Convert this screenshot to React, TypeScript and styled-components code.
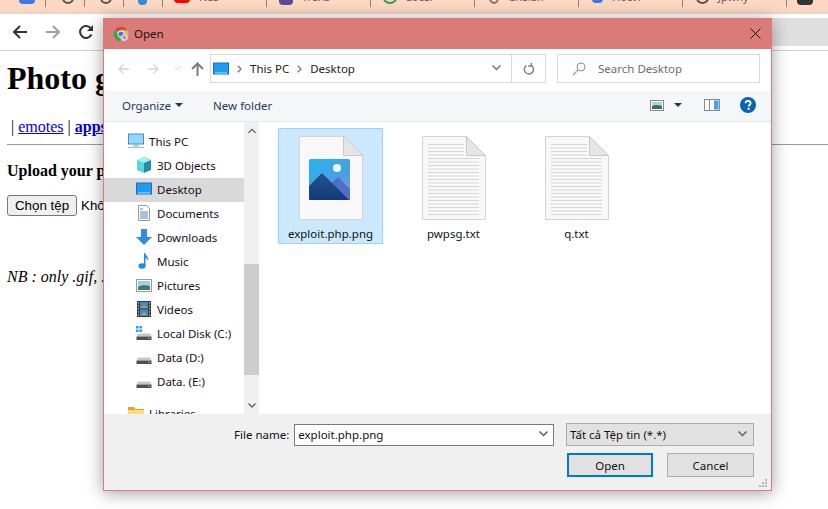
import React from "react";
import styled, { createGlobalStyle } from "styled-components";

const GlobalStyle = createGlobalStyle`
  html, body { margin: 0; padding: 0; background: #ffffff; }
  #root { width: 828px; height: 509px; overflow: hidden; }
`;

const UI_FONT = `"Noto Sans", "Open Sans", sans-serif`;

const Screen = styled.div`
  position: relative;
  width: 828px;
  height: 509px;
  overflow: hidden;
  background: #ffffff;
  font-family: "Liberation Serif", serif;
`;

/* ---------- browser chrome ---------- */

const BookmarkStrip = styled.div`
  display: flex;
  height: 14px;
  padding-left: 7px;
  background: linear-gradient(180deg, #fdd9c4 0%, #fcd8c3 70%, #eed2c0 100%);
  overflow: hidden;
`;

const Bookmark = styled.div<{ $w: number; $pad: number }>`
  display: flex;
  align-items: flex-start;
  gap: 9px;
  flex: 0 0 ${({ $w }) => $w}px;
  height: 7px;
  padding-left: ${({ $pad }) => $pad}px;
  box-sizing: border-box;
  border-right: 1px solid #8b8580;
  white-space: nowrap;
`;

const BookmarkIcon = styled.span<{ $c: string; $w: number; $show: number; $ring?: boolean }>`
  display: block;
  flex: none;
  box-sizing: border-box;
  width: ${({ $w }) => $w}px;
  height: ${({ $ring }) => ($ring ? 12 : 10)}px;
  margin-top: ${({ $show, $ring }) => $show - ($ring ? 12 : 10)}px;
  border-radius: ${({ $ring }) => ($ring ? "50%" : "0 0 4px 4px")};
  background: ${({ $c, $ring }) => ($ring ? "transparent" : $c)};
  border: ${({ $c, $ring }) => ($ring ? `2px solid ${$c}` : "0")};
`;

const BookmarkText = styled.span`
  margin-top: -8px;
  font: 11px/10px ${UI_FONT};
  color: #6a5560;
`;

const BrowserBar = styled.div`
  display: flex;
  align-items: center;
  height: 36px;
  padding-left: 12px;
  gap: 17px;
  background: #ffffff;
  border-bottom: 1px solid #cccccc;
`;

const Omnibox = styled.div`
  flex: 1;
  height: 28px;
  margin: 0 0 0 8px;
  background: #dfdfdf;
`;

/* ---------- page behind the dialog ---------- */

const Page = styled.main`
  padding: 0 7px;
  color: #000;
  font-size: 16px;
`;

const PageTitle = styled.h1`
  margin: 9px 0 0;
  font-size: 32px;
  line-height: 37px;
  white-space: nowrap;
`;

const LinkRow = styled.p`
  margin: 21px 0 0;
  padding-left: 4px;
  line-height: 18px;
  white-space: nowrap;
  a { color: #0000ee; }
`;

const Rule = styled.hr`
  margin: 8px -7px 0 0;
  border: 0;
  border-top: 1px solid #9a9a9a;
`;

const UploadHeading = styled.p`
  margin: 17px 0 0;
  font-weight: bold;
  line-height: 18px;
  white-space: nowrap;
`;

const FileRow = styled.div`
  display: flex;
  align-items: center;
  gap: 4px;
  margin-top: 15px;
  font: 13.33px "Liberation Sans", sans-serif;
  white-space: nowrap;
`;

const ChooseButton = styled.button`
  width: 70px;
  height: 21px;
  padding: 0;
  background: #efefef;
  border: 1px solid #767676;
  border-radius: 3px;
  color: #000;
  font: 13.33px "Liberation Sans", sans-serif;
`;

const Note = styled.p`
  margin: 52px 0 0;
  font-style: italic;
  line-height: 18px;
  white-space: nowrap;
`;

/* ---------- dialog ---------- */

const Dialog = styled.section`
  position: absolute;
  left: 103px;
  top: 18px;
  width: 669px;
  height: 473px;
  box-sizing: border-box;
  display: flex;
  flex-direction: column;
  background: #ffffff;
  border: 1px solid #da7d7a;
  border-top: 0;
  box-shadow: 0 2px 16px rgba(0, 0, 0, 0.38);
  font-family: ${UI_FONT};
  font-size: 11.5px;
  color: #111;
`;

const TitleBar = styled.header`
  display: flex;
  align-items: center;
  flex: 0 0 31px;
  margin: 0 -1px;
  padding: 0 11px 0 10px;
  gap: 5px;
  background: #db7b79;
  font-size: 11.5px;
  color: #1b1111;
`;

const TitleText = styled.span`
  flex: 1;
`;

const NavRow = styled.div`
  display: flex;
  align-items: center;
  flex: 0 0 42px;
  padding: 0 0 3px 4px;
  box-sizing: border-box;
`;

const NavButton = styled.span<{ $w: number }>`
  display: flex;
  justify-content: center;
  flex: 0 0 ${({ $w }) => $w}px;
`;

const AddressBox = styled.div`
  display: flex;
  align-items: center;
  flex: 0 0 336px;
  height: 29px;
  margin-left: 2px;
  padding-left: 2px;
  box-sizing: border-box;
  border: 1px solid #d9d9d9;
  color: #222;
`;

const Crumb = styled.span`
  display: flex;
  margin: 0 8px;
`;

const AddressChevron = styled.span`
  display: flex;
  margin-left: auto;
  margin-right: 10px;
`;

const AddressEnd = styled.div`
  display: flex;
  align-items: center;
  justify-content: center;
  width: 33px;
  height: 100%;
  border-left: 1px solid #d9d9d9;
`;

const SearchBox = styled.div`
  display: flex;
  align-items: center;
  flex: 0 0 203px;
  height: 29px;
  margin-left: 11px;
  padding-left: 14px;
  gap: 12px;
  box-sizing: border-box;
  border: 1px solid #d9d9d9;
  color: #6d6d6d;
  white-space: nowrap;
`;

const CommandBar = styled.div`
  display: flex;
  align-items: center;
  flex: 0 0 31px;
  box-sizing: border-box;
  padding: 0 15px 2px 18px;
  background: #f5f6f7;
  border-bottom: 1px solid #e8e9ea;
  color: #1e395b;
`;

const Command = styled.span<{ $after?: number; $inner?: number }>`
  display: flex;
  align-items: center;
  gap: ${({ $inner }) => $inner ?? 5}px;
  margin-right: ${({ $after }) => $after ?? 0}px;
  white-space: nowrap;
`;

const CommandSpacer = styled.span`
  flex: 1;
`;

const Body = styled.div`
  display: flex;
  flex: 1;
  min-height: 0;
`;

const Sidebar = styled.nav`
  flex: 0 0 140px;
  padding-top: 8px;
  overflow: hidden;
`;

const SideRow = styled.div<{ $root?: boolean; $active?: boolean; $gapAbove?: boolean }>`
  display: flex;
  align-items: center;
  gap: 5px;
  height: 24px;
  box-sizing: border-box;
  margin-top: ${({ $gapAbove }) => ($gapAbove ? 8 : 0)}px;
  padding: 0 0 2px ${({ $root }) => ($root ? 24 : 32)}px;
  background: ${({ $active }) => ($active ? "#d9d9d9" : "transparent")};
  color: #1a0a1a;
  white-space: nowrap;
`;

const SideIcon = styled.span`
  display: flex;
  align-items: center;
  justify-content: center;
  flex: 0 0 16px;
  height: 16px;
`;

const ScrollBar = styled.div`
  display: flex;
  flex-direction: column;
  flex: 0 0 15px;
  background: #f0f0f0;
`;

const ScrollEnd = styled.span`
  display: flex;
  align-items: center;
  justify-content: center;
  flex: 0 0 17px;
`;

const ScrollTrack = styled.div`
  flex: 1;
  padding-top: 125px;
`;

const ScrollThumb = styled.div`
  height: 111px;
  background: #cdcdcd;
`;

const FileGrid = styled.div`
  display: flex;
  flex: 1;
  align-items: flex-start;
  gap: 18px;
  padding: 6px 0 0 19px;
`;

const FileTile = styled.div<{ $selected?: boolean }>`
  display: flex;
  flex-direction: column;
  align-items: center;
  width: 105px;
  height: 116px;
  box-sizing: border-box;
  padding-top: 7px;
  background: ${({ $selected }) => ($selected ? "#cce8ff" : "transparent")};
  border: 1px solid ${({ $selected }) => ($selected ? "#99d1ff" : "transparent")};
  color: #111;
`;

const FileLabel = styled.span`
  margin-top: 6px;
  line-height: 16px;
`;

const Footer = styled.footer`
  position: relative;
  display: grid;
  grid-template-columns: 260px 188px;
  grid-template-rows: 23px 24px;
  column-gap: 12px;
  row-gap: 7px;
  justify-content: end;
  flex: 0 0 76px;
  box-sizing: border-box;
  padding: 9px 17px 0 0;
  background: #f0f0f0;
`;

const FileNameField = styled.label`
  display: flex;
  align-items: center;
  margin-left: -60px;
  gap: 5px;
  white-space: nowrap;
`;

const FileNameInput = styled.div`
  display: flex;
  align-items: center;
  justify-content: space-between;
  flex: 1;
  height: 22px;
  box-sizing: border-box;
  padding: 0 5px 0 3px;
  background: #fff;
  border: 1px solid #7a7a7a;
`;

const TypeSelect = styled.div`
  display: flex;
  align-items: center;
  justify-content: space-between;
  padding: 0 6px 0 3px;
  background: #e1e1e1;
  border: 1px solid #adadad;
  white-space: nowrap;
`;

const Buttons = styled.div`
  grid-column: 2;
  display: flex;
  justify-content: space-between;
  padding-left: 1px;
`;

const DialogButton = styled.button<{ $primary?: boolean }>`
  width: ${({ $primary }) => ($primary ? 86 : 87)}px;
  height: 24px;
  padding: 0;
  box-sizing: border-box;
  background: #e1e1e1;
  border: ${({ $primary }) => ($primary ? "2px solid #0078d7" : "1px solid #adadad")};
  color: #111;
  font-family: ${UI_FONT};
  font-size: 11.5px;
`;

const ResizeGrip = styled.svg`
  position: absolute;
  right: 3px;
  bottom: 2px;
`;

/* ---------- icons ---------- */

const ArrowLeft = ({ c = "#333" }: { c?: string }) => (
  <svg width="16" height="16" viewBox="0 0 16 16" fill="none" stroke={c} strokeWidth="2">
    <path d="M15 8H2M8 2 2 8l6 6" />
  </svg>
);

const ArrowRight = ({ c = "#a0a0a0" }: { c?: string }) => (
  <svg width="16" height="16" viewBox="0 0 16 16" fill="none" stroke={c} strokeWidth="2">
    <path d="M1 8h13M8 2l6 6-6 6" />
  </svg>
);

const Reload = () => (
  <svg width="16" height="16" viewBox="0 0 16 16" fill="none" stroke="#333" strokeWidth="2">
    <path d="M13.5 10.5A6 6 0 1 1 13 4.5" />
    <path d="M15 1v6H9z" fill="#333" stroke="none" />
  </svg>
);

const SmallBack = () => (
  <svg width="13" height="12" viewBox="0 0 13 12" fill="none" stroke="#d5d5d5" strokeWidth="1.4">
    <path d="M12 6H2M6.5 1.5 2 6l4.5 4.5" />
  </svg>
);

const SmallForward = () => (
  <svg width="13" height="12" viewBox="0 0 13 12" fill="none" stroke="#d5d5d5" strokeWidth="1.4">
    <path d="M1 6h10M6.5 1.5 11 6l-4.5 4.5" />
  </svg>
);

const Chevron = ({ c = "#888", w = 9, sw = 1.5, up = false }: { c?: string; w?: number; sw?: number; up?: boolean }) => (
  <svg width={w} height={w * 0.67} viewBox="0 0 9 6" fill="none" stroke={c} strokeWidth={sw}>
    <path d={up ? "M.5 5.5 4.5 1.5l4 4" : "M.5.5l4 4 4-4"} />
  </svg>
);

const CrumbArrow = () => (
  <svg width="5" height="8" viewBox="0 0 5 8" fill="none" stroke="#777" strokeWidth="1.3">
    <path d="M.8.8 4 4 .8 7.2" />
  </svg>
);

const UpArrow = () => (
  <svg width="13" height="14" viewBox="0 0 13 14" fill="none" stroke="#7c7c7c" strokeWidth="2">
    <path d="M6.5 14V2M1 7l5.5-5.5L12 7" />
  </svg>
);

const RefreshSmall = () => (
  <svg width="12" height="12" viewBox="0 0 12 12" fill="none" stroke="#7e7e7e" strokeWidth="1.4">
    <path d="M3.5 2.4a4.6 4.6 0 1 0 4.6-.1" />
    <path d="M3.2 0v3.2H0" transform="translate(5.2 -.2) scale(1 1)" />
  </svg>
);

const SearchIcon = () => (
  <svg width="14" height="14" viewBox="0 0 14 14" fill="none">
    <circle cx="9" cy="5" r="4" stroke="#8a8a8a" />
    <path d="M6 8 1 13" stroke="#c9908f" strokeWidth="1.2" />
  </svg>
);

const Caret = () => (
  <svg width="8" height="4" viewBox="0 0 8 4">
    <path d="M0 0h8L4 4z" fill="#1e395b" />
  </svg>
);

const Monitor = () => (
  <svg width="16" height="14" viewBox="0 0 16 14">
    <rect x="0.5" y="1" width="15" height="11" fill="#1e9cf0" stroke="#1770b8" />
    <path d="M2 11h12" stroke="#d8effd" strokeWidth="0.8" />
  </svg>
);

const ThisPcIcon = () => (
  <svg width="16" height="16" viewBox="0 0 16 16">
    <rect x="0.5" y="1" width="15" height="10" fill="#8fd8fb" stroke="#4c8fb5" />
    <path d="M5.5 12h5v1.4h-5z" fill="#9ab8c8" />
    <path d="M0 14.5h16" stroke="#a9b8c0" strokeWidth="1.2" />
  </svg>
);

const CubeIcon = () => (
  <svg width="16" height="16" viewBox="0 0 16 16">
    <path d="M8 0 15 3v10l-7 3z" fill="#1f8fa8" />
    <path d="M8 0 1 3v10l7 3z" fill="#5ad6e0" />
    <path d="M1 3l7 3 7-3-7-3z" fill="#a6eef2" />
  </svg>
);

const DocIcon = () => (
  <svg width="16" height="16" viewBox="0 0 16 16" fill="none">
    <path d="M2.5.5h8l3 3v12h-11z" fill="#fff" stroke="#9a9a9a" />
    <path d="M4 4h3M4 7h8M4 9h8M4 11h8M4 13h8" stroke="#4a86b8" />
  </svg>
);

const DownloadIcon = () => (
  <svg width="16" height="16" viewBox="0 0 16 16">
    <path d="M5 0h6v8h5l-8 8-8-8h5z" fill="#2f8ee0" />
  </svg>
);

const MusicIcon = () => (
  <svg width="16" height="16" viewBox="0 0 16 16">
    <ellipse cx="6" cy="13" rx="3.6" ry="2.8" fill="#1e8fe0" />
    <path d="M8 13V0h1.2c.3 3 3.8 3.6 3 8-.6-2-2-2.8-2.7-3V13z" fill="#1e8fe0" />
  </svg>
);

const PicturesIcon = () => (
  <svg width="16" height="13" viewBox="0 0 16 13">
    <rect x="0.5" y="0.5" width="15" height="12" fill="#fff" stroke="#999" />
    <rect x="2" y="2" width="12" height="9" fill="#9fd0ee" />
    <path d="M2 8c3-2 8-2 12-1v4H2z" fill="#3f7c5e" />
  </svg>
);

const VideosIcon = () => (
  <svg width="14" height="16" viewBox="0 0 14 16">
    <rect width="14" height="16" fill="#3a3a3a" />
    <rect x="3" y="1" width="8" height="6.5" fill="#2f8ee0" />
    <rect x="3" y="8.5" width="8" height="6.5" fill="#2f8ee0" />
    <path d="M3 7l4-3 4 3M3 14l4-3 4 3" fill="#d9902f" />
    <path d="M1 2h1M1 5h1M1 8h1M1 11h1M1 14h1M12 2h1M12 5h1M12 8h1M12 11h1M12 14h1" stroke="#fff" />
  </svg>
);

const DiskIcon = ({ win = false }: { win?: boolean }) => (
  <svg width="16" height="16" viewBox="0 0 16 16">
    {win && <path d="M0 1h2.6v2.6H0zM3.4 1H6v2.6H3.4zM0 4.4h2.6V7H0zM3.4 4.4H6V7H3.4z" fill="#1fa3e8" />}
    <path d="M2 8.5h12l1.5 3h-15z" fill="#c6c6c6" />
    <rect x="0.5" y="11.5" width="15" height="3.5" fill="#4f4f4f" />
    <rect x="12" y="12.5" width="2" height="1.4" fill="#37d24a" />
  </svg>
);

const FolderIcon = () => (
  <svg width="16" height="16" viewBox="0 0 16 16">
    <path d="M0 2h6l1.5 2H16v11H0z" fill="#e0a526" />
    <path d="M0 5h16v10H0z" fill="#fcdc7c" />
  </svg>
);

const ViewIcon = () => (
  <svg width="14" height="11" viewBox="0 0 14 11">
    <rect x="0.5" y="0.5" width="13" height="10" fill="#fff" stroke="#8a8a8a" />
    <rect x="2" y="2" width="10" height="7" fill="#a9d3ec" />
    <path d="M2 6c3-1.5 6-1 10 0v3H2z" fill="#3f6f5a" />
  </svg>
);

const PaneIcon = () => (
  <svg width="16" height="12" viewBox="0 0 16 12">
    <rect x="0.5" y="0.5" width="15" height="11" fill="#fff" stroke="#8a8a8a" />
    <rect x="10" y="1.5" width="4.5" height="9" fill="#4a9fe8" />
    <path d="M5.5 1v10" stroke="#8a8a8a" />
  </svg>
);

const HelpIcon = () => (
  <svg width="16" height="16" viewBox="0 0 16 16">
    <circle cx="8" cy="8" r="8" fill="#0a63b8" />
    <path d="M5.6 6.2c0-3.2 5-3.2 5 0 0 1.8-2 1.8-2 3.4" fill="none" stroke="#fff" strokeWidth="1.8" />
    <rect x="7.6" y="10.8" width="2" height="2" fill="#fff" />
  </svg>
);

const CloseIcon = () => (
  <svg width="11" height="11" viewBox="0 0 11 11" fill="none" stroke="#1a1010" strokeWidth="1">
    <path d="M.5.5l10 10M10.5.5l-10 10" />
  </svg>
);

const ChromeDialogIcon = () => (
  <svg width="16" height="16" viewBox="0 0 16 16">
    <circle cx="8" cy="8" r="7.5" fill="#e2c04a" />
    <path d="M8 .5A7.5 7.5 0 0 1 14.5 4.3H8A3.7 3.7 0 0 0 4.6 6.6L2.2 3.2A7.5 7.5 0 0 1 8 .5z" fill="#d8483c" />
    <path d="M2.2 3.2 5.6 9.5 8.8 15.4A7.5 7.5 0 0 1 2.2 3.2z" fill="#3ea14f" />
    <circle cx="8" cy="8" r="3.4" fill="#fff" />
    <circle cx="8" cy="8" r="2.6" fill="#3f78dd" />
    <circle cx="11.5" cy="11.5" r="3.4" fill="#c9cdf0" />
    <path d="M10.5 10.5l2 2" stroke="#d8483c" strokeWidth="1.4" />
  </svg>
);

const PageShape = ({ children }: { children?: React.ReactNode }) => (
  <svg width="64" height="84" viewBox="0 0 64 84">
    <path d="M.5.5h44l19 19v64H.5z" fill="#f8f8f8" stroke="#d4d4d4" />
    <path d="M44.5.5v19h19z" fill="#e6e6e6" stroke="#c8c8c8" />
    {children}
  </svg>
);

const ImageFileIcon = () => (
  <PageShape>
    <defs>
      <linearGradient id="sky" x1="0" y1="0" x2="1" y2="1">
        <stop offset="0" stopColor="#26b4ee" />
        <stop offset="0.6" stopColor="#4a9fe4" />
        <stop offset="1" stopColor="#8c8fe0" />
      </linearGradient>
      <linearGradient id="peak" x1="0" y1="0" x2="0" y2="1">
        <stop offset="0" stopColor="#25528f" />
        <stop offset="1" stopColor="#123a78" />
      </linearGradient>
    </defs>
    <rect x="10" y="23" width="41" height="41" rx="1.5" fill="url(#sky)" />
    <circle cx="38" cy="32" r="4" fill="#eef6fb" />
    <path d="M33 47l6-6 12 12v11H30z" fill="#4f6fc4" />
    <path d="M10 50l13-13 27 27H11.5a1.5 1.5 0 0 1-1.5-1.5z" fill="url(#peak)" />
  </PageShape>
);

const textLines = Array.from({ length: 21 }, (_, i) => 8 + i * 3.5);

const TextFileIcon = () => (
  <PageShape>
    {textLines.map((y) => (
      <path key={y} d={`M6 ${y + 0.5}H${y < 20 ? 42 : 57}`} stroke="#d6d6d6" />
    ))}
  </PageShape>
);

const places = [
  { label: "3D Objects", icon: <CubeIcon /> },
  { label: "Desktop", icon: <Monitor />, active: true },
  { label: "Documents", icon: <DocIcon /> },
  { label: "Downloads", icon: <DownloadIcon /> },
  { label: "Music", icon: <MusicIcon /> },
  { label: "Pictures", icon: <PicturesIcon /> },
  { label: "Videos", icon: <VideosIcon /> },
  { label: "Local Disk (C:)", icon: <DiskIcon win /> },
  { label: "Data (D:)", icon: <DiskIcon /> },
  { label: "Data. (E:)", icon: <DiskIcon /> },
];

const bookmarks = [
  { w: 39, pad: 12, c: "#3b78e7", iw: 16, show: 4, text: "" },
  { w: 39, pad: 16, c: "#555", iw: 12, show: 4, ring: true, text: "" },
  { w: 39, pad: 15, c: "#555", iw: 12, show: 4, ring: true, text: "" },
  { w: 39, pad: 14, c: "#2a8fe0", iw: 9, show: 5, text: "" },
  { w: 104, pad: 11, c: "#f00", iw: 16, show: 3, text: "Nas" },
  { w: 104, pad: 12, c: "#5a4a9a", iw: 14, show: 5, text: "Trans" },
  { w: 104, pad: 12, c: "#2e9e4f", iw: 14, show: 4, ring: true, text: "Local" },
  { w: 104, pad: 14, c: "#777", iw: 10, show: 4, ring: true, text: "Chalan" },
  { w: 104, pad: 13, c: "#3b78e7", iw: 11, show: 3, text: "Hocvl" },
  { w: 104, pad: 13, c: "#555", iw: 13, show: 4, ring: true, text: "Jpwny" },
  { w: 60, pad: 10, c: "#333", iw: 16, show: 5, text: "" },
];

export default function App() {
  return (
    <Screen>
      <GlobalStyle />
      <BookmarkStrip>
        {bookmarks.map((b, i) => (
          <Bookmark key={i} $w={b.w} $pad={b.pad}>
            <BookmarkIcon $c={b.c} $w={b.iw} $show={b.show} $ring={b.ring} />
            {b.text && <BookmarkText>{b.text}</BookmarkText>}
          </Bookmark>
        ))}
      </BookmarkStrip>
      <BrowserBar>
        <ArrowLeft />
        <ArrowRight />
        <Reload />
        <Omnibox />
      </BrowserBar>
      <Page>
        <PageTitle>Photo gallery</PageTitle>
        <LinkRow>
          | <a href="#emotes">emotes</a> | <a href="#apps"><b>apps</b></a>
        </LinkRow>
        <Rule />
        <UploadHeading>Upload your photo</UploadHeading>
        <FileRow>
          <ChooseButton>Chọn tệp</ChooseButton>
          Không có tệp nào được chọn
        </FileRow>
        <Note>NB : only .gif, .jpg, .png</Note>
      </Page>

      <Dialog>
        <TitleBar>
          <ChromeDialogIcon />
          <TitleText>Open</TitleText>
          <CloseIcon />
        </TitleBar>
        <NavRow>
          <NavButton $w={30}><SmallBack /></NavButton>
          <NavButton $w={30}><SmallForward /></NavButton>
          <NavButton $w={18}><Chevron c="#d5d5d5" w={7} sw={1.2} /></NavButton>
          <NavButton $w={22}><UpArrow /></NavButton>
          <AddressBox>
            <Monitor />
            <Crumb><CrumbArrow /></Crumb>
            <span>This PC</span>
            <Crumb><CrumbArrow /></Crumb>
            <span>Desktop</span>
            <AddressChevron><Chevron c="#777" /></AddressChevron>
            <AddressEnd><RefreshSmall /></AddressEnd>
          </AddressBox>
          <SearchBox>
            <SearchIcon />
            Search Desktop
          </SearchBox>
        </NavRow>
        <CommandBar>
          <Command $after={30} $inner={4}>Organize <Caret /></Command>
          <Command>New folder</Command>
          <CommandSpacer />
          <Command $after={22} $inner={10}><ViewIcon /><Caret /></Command>
          <Command $after={20}><PaneIcon /></Command>
          <HelpIcon />
        </CommandBar>
        <Body>
          <Sidebar>
            <SideRow $root><SideIcon><ThisPcIcon /></SideIcon>This PC</SideRow>
            {places.map((p) => (
              <SideRow key={p.label} $active={p.active}><SideIcon>{p.icon}</SideIcon>{p.label}</SideRow>
            ))}
            <SideRow $root $gapAbove><SideIcon><FolderIcon /></SideIcon>Libraries</SideRow>
          </Sidebar>
          <ScrollBar>
            <ScrollEnd><Chevron c="#606060" up w={8} /></ScrollEnd>
            <ScrollTrack><ScrollThumb /></ScrollTrack>
            <ScrollEnd><Chevron c="#606060" w={8} /></ScrollEnd>
          </ScrollBar>
          <FileGrid>
            <FileTile $selected>
              <ImageFileIcon />
              <FileLabel>exploit.php.png</FileLabel>
            </FileTile>
            <FileTile>
              <TextFileIcon />
              <FileLabel>pwpsg.txt</FileLabel>
            </FileTile>
            <FileTile>
              <TextFileIcon />
              <FileLabel>q.txt</FileLabel>
            </FileTile>
          </FileGrid>
        </Body>
        <Footer>
          <FileNameField>
            File name:
            <FileNameInput>
              exploit.php.png
              <Chevron c="#606060" />
            </FileNameInput>
          </FileNameField>
          <TypeSelect>
            Tất cả Tệp tin (*.*)
            <Chevron c="#606060" />
          </TypeSelect>
          <Buttons>
            <DialogButton $primary>Open</DialogButton>
            <DialogButton>Cancel</DialogButton>
          </Buttons>
          <ResizeGrip width="9" height="9" viewBox="0 0 9 9" fill="#b5b5b5">
            <path d="M6 0h2v2H6zM3 3h2v2H3zM6 3h2v2H6zM0 6h2v2H0zM3 6h2v2H3zM6 6h2v2H6z" />
          </ResizeGrip>
        </Footer>
      </Dialog>
    </Screen>
  );
}
